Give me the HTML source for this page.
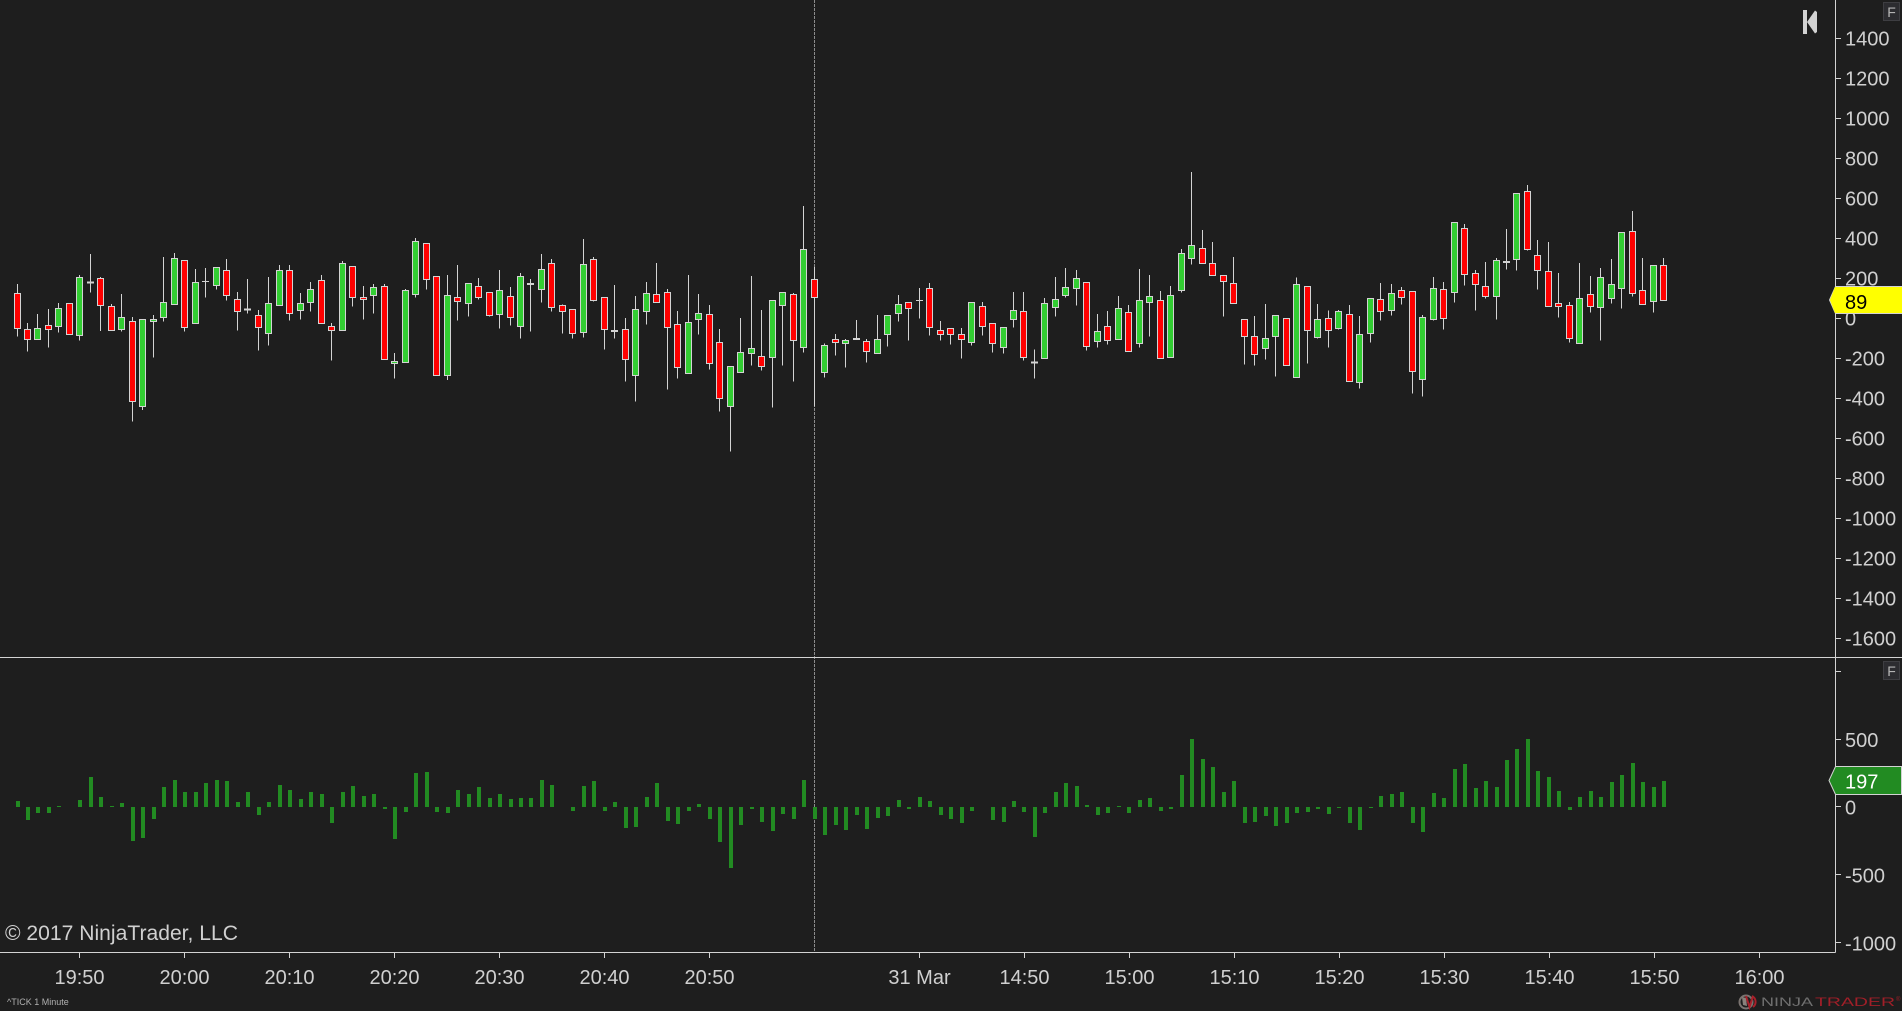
<!DOCTYPE html>
<html><head><meta charset="utf-8"><title>^TICK 1 Minute</title>
<style>
html,body{margin:0;padding:0;background:#1e1e1e;width:1902px;height:1011px;overflow:hidden}
svg{display:block;position:absolute;left:0;top:0}
text{font-family:"Liberation Sans",Arial,sans-serif;font-size:20px;fill:#d0d0d0}
.w{stroke:#d3d3d3;stroke-width:3;fill:none}
.r{stroke:#d3d3d3;stroke-width:3;fill:#f00}
.g{stroke:#d3d3d3;stroke-width:3;fill:#32cd32}
.dt{stroke:#d3d3d3;stroke-width:6;fill:none}
.dn{stroke:#d3d3d3;stroke-width:3;fill:none}
.v{fill:#228b22}
</style></head><body>
<svg width="1902" height="1011" viewBox="0 0 1902 1011" xmlns="http://www.w3.org/2000/svg">
<rect width="1902" height="1011" fill="#1e1e1e"/>
<path d="M814.5 0V952" stroke="#8c8c8c" stroke-width="1" stroke-dasharray="3 1" shape-rendering="crispEdges"/>

<g shape-rendering="crispEdges">
<!-- candles 1 -->
<g transform="translate(0 220) scale(.33333)">
<path class="w" d="M52 192V350M82 309V395M112 282V359M145 267V383M175 249V338M238 165V362M271 102V218M301 171V333M334 252V332M364 222V335M397 291V605M427 298V570M460 285V413M490 111V305M523 99V254M553 120V335M586 147V311M616 144V233M649 141V209M679 117V242M712 216V332M742 177V281M775 270V392M805 171V377M838 135V257M868 135V302M901 219V299M931 186V275M964 165V311M994 309V422M1027 123V332M1057 138V260M1090 198V299M1120 192V281M1153 192V419M1183 399V476M1216 207V428M1246 54V233"/>
<path class="r" d="M43 220h18V325h-18zM73 328h18V358h-18zM136 317h18V328h-18zM199 250h18V343h-18zM292 176h18V256h-18zM325 259h18V331h-18zM388 304h18V544h-18zM544 121h18V322h-18zM670 151h18V226h-18zM703 238h18V274h-18zM766 286h18V322h-18zM859 151h18V280h-18zM955 181h18V310h-18zM985 319h18V331h-18zM1048 139h18V232h-18zM1081 232h18V239h-18zM1144 199h18V418h-18z"/>
<path class="g" d="M103 326h18V358h-18zM166 265h18V319h-18zM229 172h18V346h-18zM355 292h18V328h-18zM418 298h18V559h-18zM451 298h18V305h-18zM481 248h18V292h-18zM514 115h18V253h-18zM577 187h18V310h-18zM640 142h18V196h-18zM796 250h18V340h-18zM829 151h18V256h-18zM892 250h18V271h-18zM922 208h18V247h-18zM1018 130h18V331h-18zM1111 202h18V226h-18zM1174 424h18V430h-18zM1207 211h18V427h-18zM1237 64h18V223h-18z"/>
<path class="dt" d="M261 188h21M732 269h21"/><path class="dn" d="M606 184h21"/>
</g>
<!-- candles 2 -->
<g transform="translate(420 190) scale(.33333)">
<path class="w" d="M19 160V299M49 259V557M82 255V570M112 225V392M145 280V380M175 264V329M208 307V380M238 240V416M271 291V407M301 249V446M331 267V425M364 192V338M394 207V365M427 343V431M457 358V446M490 147V443M520 201V335M553 322V479M583 285V446M616 384V575M646 318V635M679 276V404M709 219V338M742 297V599M772 363V566M805 255V551M835 312V434M868 345V539M898 417V665M931 529V785M961 384V548M994 258V527M1024 360V542M1057 331V653M1087 307V527M1120 309V575M1150 48V488M1183 231V650M1213 460V563M1246 432V497"/>
<path class="r" d="M10 161h18V268h-18zM40 260h18V556h-18zM103 322h18V334h-18zM166 290h18V322h-18zM199 308h18V376h-18zM262 320h18V382h-18zM385 221h18V352h-18zM418 347h18V364h-18zM448 359h18V430h-18zM511 209h18V331h-18zM544 323h18V418h-18zM607 419h18V508h-18zM700 314h18V337h-18zM733 308h18V412h-18zM763 404h18V532h-18zM859 374h18V520h-18zM889 458h18V625h-18zM1015 500h18V529h-18zM1111 314h18V451h-18zM1174 269h18V322h-18zM1237 448h18V457h-18z"/>
<path class="g" d="M73 317h18V556h-18zM136 281h18V340h-18zM229 302h18V373h-18zM292 260h18V409h-18zM355 239h18V298h-18zM481 224h18V427h-18zM637 359h18V556h-18zM670 311h18V364h-18zM796 398h18V550h-18zM826 371h18V388h-18zM922 530h18V649h-18zM952 488h18V547h-18zM985 476h18V490h-18zM1048 332h18V502h-18zM1078 308h18V346h-18zM1141 179h18V472h-18zM1204 467h18V547h-18z"/>
<path class="dt" d="M321 282h21M573 423h21"/>
</g>
<!-- candles 3 -->
<g transform="translate(840 160) scale(.33333)">
<path class="w" d="M16 537V623M49 480V537M79 537V608M112 465V581M142 466V560M175 405V485M205 427V542M238 384V476M268 369V527M301 483V542M331 505V554M364 504V596M394 427V557M427 426V527M457 490V578M490 502V581M520 396V503M550 396V602M583 568V656M613 414V596M646 351V470M676 324V413M709 330V437M739 367V572M772 462V563M802 453V554M835 408V539M865 435V575M898 327V563M928 345V530M961 393V596M991 378V593M1024 267V398M1054 36V314M1087 210V311M1117 246V347M1150 345V470M1180 291V431M1213 478V614M1243 468V617"/>
<path class="r" d="M70 545h18V574h-18zM196 428h18V445h-18zM259 386h18V502h-18zM292 512h18V523h-18zM322 506h18V523h-18zM355 524h18V539h-18zM418 440h18V499h-18zM448 491h18V550h-18zM541 455h18V592h-18zM730 368h18V559h-18zM793 500h18V541h-18zM856 458h18V574h-18zM952 422h18V595h-18zM1078 266h18V310h-18zM1108 311h18V346h-18zM1141 347h18V364h-18zM1171 371h18V430h-18zM1204 479h18V529h-18zM1234 530h18V583h-18z"/>
<path class="g" d="M7 542h18V550h-18zM103 539h18V580h-18zM133 467h18V523h-18zM166 434h18V460h-18zM385 428h18V547h-18zM481 503h18V562h-18zM511 452h18V478h-18zM604 431h18V595h-18zM637 419h18V442h-18zM667 383h18V406h-18zM700 356h18V385h-18zM763 515h18V544h-18zM826 446h18V538h-18zM889 422h18V550h-18zM919 410h18V427h-18zM982 407h18V592h-18zM1015 281h18V391h-18zM1045 257h18V295h-18z"/>
<path class="dt" d="M39 537h21M573 608h21"/><path class="dn" d="M228 421h21"/>
</g>
<!-- candles 4 -->
<g transform="translate(1260 170) scale(.33333)">
<path class="w" d="M16 402V569M46 436V620M79 445V587M109 323V623M142 349V581M172 402V506M205 422V533M235 420V479M268 405V635M298 438V656M331 385V518M361 339V452M394 342V437M424 351V404M457 364V671M487 435V680M520 321V452M550 336V479M583 157V398M613 162V347M646 300V422M676 276V386M709 264V449M739 177V299M769 69V302M802 45V242M832 210V359M865 216V410M895 309V443M928 396V518M958 279V521M991 318V428M1021 294V512M1054 267V401M1084 187V416M1117 123V380M1147 264V404M1180 286V428M1210 264V392"/>
<path class="r" d="M70 446h18V586h-18zM133 350h18V481h-18zM196 446h18V481h-18zM259 434h18V634h-18zM352 389h18V424h-18zM415 362h18V382h-18zM448 365h18V604h-18zM541 359h18V445h-18zM604 176h18V313h-18zM637 311h18V343h-18zM667 350h18V379h-18zM793 65h18V238h-18zM823 257h18V301h-18zM856 305h18V409h-18zM886 401h18V409h-18zM919 407h18V505h-18zM982 374h18V409h-18zM1108 185h18V370h-18zM1138 362h18V403h-18zM1201 287h18V391h-18z"/>
<path class="g" d="M7 506h18V535h-18zM37 437h18V499h-18zM100 344h18V622h-18zM163 449h18V502h-18zM226 425h18V475h-18zM289 494h18V637h-18zM322 386h18V490h-18zM385 371h18V421h-18zM478 443h18V628h-18zM511 356h18V448h-18zM574 158h18V367h-18zM700 272h18V379h-18zM760 70h18V268h-18zM949 386h18V520h-18zM1012 323h18V412h-18zM1045 344h18V385h-18zM1075 188h18V355h-18zM1171 287h18V394h-18z"/>
<path class="dt" d="M729 276h21"/>
</g>
<!-- volume 1 -->
<g transform="translate(0 730) scale(.33333)">
<path class="v" d="M48 231h12V213h-12zM78 231h12V270h-12zM108 231h12V249h-12zM141 231h12V249h-12zM171 231h12V228h-12zM234 231h12V210h-12zM267 231h12V141h-12zM297 231h12V201h-12zM330 231h12V228h-12zM360 231h12V219h-12zM393 231h12V333h-12zM423 231h12V324h-12zM456 231h12V267h-12zM486 231h12V171h-12zM519 231h12V150h-12zM549 231h12V186h-12zM582 231h12V186h-12zM612 231h12V159h-12zM645 231h12V150h-12zM675 231h12V153h-12zM708 231h12V216h-12zM738 231h12V186h-12zM771 231h12V255h-12zM801 231h12V216h-12zM834 231h12V165h-12zM864 231h12V180h-12zM897 231h12V207h-12zM927 231h12V186h-12zM960 231h12V192h-12zM990 231h12V279h-12zM1023 231h12V186h-12zM1053 231h12V168h-12zM1086 231h12V198h-12zM1116 231h12V192h-12zM1149 231h12V237h-12zM1179 231h12V327h-12zM1212 231h12V246h-12zM1242 231h12V129h-12z"/>
</g>
<g transform="translate(420 730) scale(.33333)">
<path class="v" d="M15 231h12V126h-12zM45 231h12V246h-12zM78 231h12V249h-12zM108 231h12V180h-12zM141 231h12V192h-12zM171 231h12V171h-12zM204 231h12V204h-12zM234 231h12V192h-12zM267 231h12V207h-12zM297 231h12V204h-12zM327 231h12V204h-12zM360 231h12V150h-12zM390 231h12V165h-12zM453 231h12V243h-12zM486 231h12V168h-12zM516 231h12V153h-12zM549 231h12V243h-12zM579 231h12V216h-12zM612 231h12V294h-12zM642 231h12V291h-12zM675 231h12V201h-12zM705 231h12V159h-12zM738 231h12V273h-12zM768 231h12V282h-12zM801 231h12V243h-12zM831 231h12V222h-12zM864 231h12V267h-12zM894 231h12V336h-12zM927 231h12V414h-12zM957 231h12V285h-12zM990 231h12V237h-12zM1020 231h12V276h-12zM1053 231h12V303h-12zM1083 231h12V252h-12zM1116 231h12V267h-12zM1146 231h12V150h-12zM1179 231h12V267h-12zM1209 231h12V315h-12zM1242 231h12V285h-12z"/>
</g>
<g transform="translate(840 730) scale(.33333)">
<path class="v" d="M12 231h12V300h-12zM45 231h12V255h-12zM75 231h12V297h-12zM108 231h12V264h-12zM138 231h12V258h-12zM171 231h12V210h-12zM201 231h12V237h-12zM234 231h12V201h-12zM264 231h12V213h-12zM297 231h12V255h-12zM327 231h12V267h-12zM360 231h12V279h-12zM390 231h12V243h-12zM453 231h12V270h-12zM486 231h12V276h-12zM516 231h12V213h-12zM546 231h12V246h-12zM579 231h12V321h-12zM609 231h12V249h-12zM642 231h12V186h-12zM672 231h12V159h-12zM705 231h12V168h-12zM735 231h12V225h-12zM768 231h12V255h-12zM798 231h12V249h-12zM831 231h12V228h-12zM861 231h12V249h-12zM894 231h12V210h-12zM924 231h12V204h-12zM957 231h12V243h-12zM987 231h12V237h-12zM1020 231h12V135h-12zM1050 231h12V27h-12zM1083 231h12V87h-12zM1113 231h12V111h-12zM1146 231h12V186h-12zM1176 231h12V153h-12zM1209 231h12V279h-12zM1239 231h12V276h-12z"/>
</g>
<g transform="translate(1260 730) scale(.33333)">
<path class="v" d="M12 231h12V258h-12zM42 231h12V288h-12zM75 231h12V279h-12zM105 231h12V249h-12zM138 231h12V246h-12zM168 231h12V237h-12zM201 231h12V252h-12zM231 231h12V234h-12zM264 231h12V279h-12zM294 231h12V300h-12zM327 231h12V234h-12zM357 231h12V198h-12zM390 231h12V192h-12zM420 231h12V186h-12zM453 231h12V279h-12zM483 231h12V306h-12zM516 231h12V189h-12zM546 231h12V204h-12zM579 231h12V117h-12zM609 231h12V102h-12zM642 231h12V174h-12zM672 231h12V153h-12zM705 231h12V171h-12zM735 231h12V90h-12zM765 231h12V57h-12zM798 231h12V27h-12zM828 231h12V123h-12zM861 231h12V141h-12zM891 231h12V183h-12zM924 231h12V240h-12zM954 231h12V201h-12zM987 231h12V183h-12zM1017 231h12V201h-12zM1050 231h12V156h-12zM1080 231h12V135h-12zM1113 231h12V99h-12zM1143 231h12V156h-12zM1176 231h12V171h-12zM1206 231h12V153h-12z"/>
</g>

<!-- axes -->
<path d="M1835.5 0V952.5M0 657.5H1902M0 952.5H1835.5" stroke="#d3d3d3" stroke-width="1" fill="none"/>
<path d="M1836 38.5h5M1836 78.5h5M1836 118.5h5M1836 158.5h5M1836 198.5h5M1836 238.5h5M1836 278.5h5M1836 318.5h5M1836 358.5h5M1836 398.5h5M1836 438.5h5M1836 478.5h5M1836 518.5h5M1836 558.5h5M1836 598.5h5M1836 638.5h5M1836 671.5h5M1836 739.5h5M1836 806.5h5M1836 874.5h5M1836 942.5h5" stroke="#d3d3d3" stroke-width="1"/>
<path d="M79.5 953v5M184.5 953v5M289.5 953v5M394.5 953v5M499.5 953v5M604.5 953v5M709.5 953v5M919.5 953v5M1024.5 953v5M1129.5 953v5M1234.5 953v5M1339.5 953v5M1444.5 953v5M1549.5 953v5M1654.5 953v5M1759.5 953v5" stroke="#d3d3d3" stroke-width="1"/>
</g>

<!-- y labels -->
<g>
<text x="1845" y="45.5">1400</text><text x="1845" y="85.5">1200</text><text x="1845" y="125.5">1000</text><text x="1845" y="165.5">800</text><text x="1845" y="205.5">600</text><text x="1845" y="245.5">400</text><text x="1845" y="285.5">200</text><text x="1845" y="325.5">0</text><text x="1845" y="365.5">-200</text><text x="1845" y="405.5">-400</text><text x="1845" y="445.5">-600</text><text x="1845" y="485.5">-800</text><text x="1845" y="525.5">-1000</text><text x="1845" y="565.5">-1200</text><text x="1845" y="605.5">-1400</text><text x="1845" y="645.5">-1600</text>
<text x="1845" y="747">500</text><text x="1845" y="814.5">0</text><text x="1845" y="882.5">-500</text><text x="1845" y="950.5">-1000</text>
</g>

<!-- x labels -->
<g text-anchor="middle">
<text x="79.5" y="984">19:50</text><text x="184.5" y="984">20:00</text><text x="289.5" y="984">20:10</text><text x="394.5" y="984">20:20</text><text x="499.5" y="984">20:30</text><text x="604.5" y="984">20:40</text><text x="709.5" y="984">20:50</text><text x="919.5" y="984">31 Mar</text><text x="1024.5" y="984">14:50</text><text x="1129.5" y="984">15:00</text><text x="1234.5" y="984">15:10</text><text x="1339.5" y="984">15:20</text><text x="1444.5" y="984">15:30</text><text x="1549.5" y="984">15:40</text><text x="1654.5" y="984">15:50</text><text x="1759.5" y="984">16:00</text>
</g>

<text x="5" y="940" style="font-size:21px" textLength="233" lengthAdjust="spacingAndGlyphs">© 2017 NinjaTrader, LLC</text>
<text x="7" y="1005" style="font-size:9px;fill:#b0b0b0">^TICK 1 Minute</text>

<!-- price flags -->
<path d="M1835.5 286.5H1902V313.5H1835.5L1829.5 300z" fill="#ff0" stroke="#d3d3d3"/>
<path d="M1835 287H1902V313H1835L1830 300z" fill="#ff0"/>
<text x="1845" y="309" style="fill:#000">89</text>
<path d="M1835.5 766.5H1901.5V794.5H1835.5L1829 780.5z" fill="#228b22" stroke="#d3d3d3"/>
<text x="1845" y="788.5" style="fill:#fff">197</text>

<!-- F buttons -->
<rect x="1883.5" y="2.5" width="16" height="18" fill="#2c2c30" stroke="#3e3e42"/>
<text x="1891.5" y="17" text-anchor="middle" style="font-size:14px;fill:#b4b4b4">F</text>
<rect x="1883.5" y="661.5" width="16" height="18" fill="#2c2c30" stroke="#3e3e42"/>
<text x="1891.5" y="676" text-anchor="middle" style="font-size:14px;fill:#b4b4b4">F</text>

<!-- back arrow -->
<rect x="1803" y="10" width="4" height="24" fill="#d3d3d3"/>
<path d="M1807 22L1815 10.5L1817 12V32L1815 33.5z" fill="#d3d3d3"/>

<!-- logo -->
<circle cx="1746" cy="1002" r="6.5" fill="none" stroke="#7a7370" stroke-width="2"/>
<path d="M1742 997l4 1 1 8-4-1z" fill="#8a817c"/>
<path d="M1746 996l3.5 11 3.5-11M1752 996a6.5 6.5 0 0 1 1 11" fill="none" stroke="#a8202a" stroke-width="2"/>
<text x="1761" y="1006" textLength="52" lengthAdjust="spacingAndGlyphs" style="font-size:11.5px;fill:#6f6f6f">NINJA</text>
<text x="1815" y="1006" textLength="80" lengthAdjust="spacingAndGlyphs" style="font-size:11.5px;fill:#a01f28">TRADER</text>
<text x="1896" y="1001" style="font-size:6px;fill:#a01f28">®</text>
</svg>
</body></html>
